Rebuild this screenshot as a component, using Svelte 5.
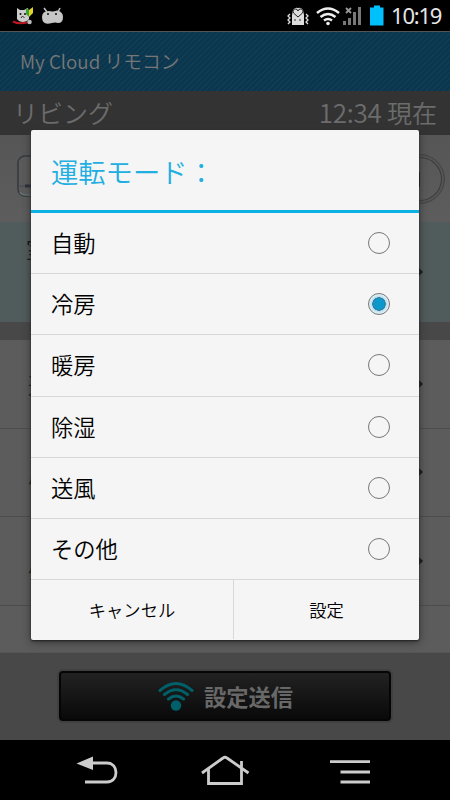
<script lang="ts">
    const modes = ["自動", "冷房", "暖房", "除湿", "送風", "その他"];
    const settings = ["運", "風", "風"];
    let selected = $state("冷房");
</script>

<div class="phone">
    <header class="status">
        <svg class="notes" width="66" height="31" viewBox="0 0 66 31">
            <path d="M17 8l3 2h4l4-2 1 5v6q-2 3-6 3t-6-3v-5z" fill="#ccc"/>
            <path d="M26 8l3 2v7l-3-3z" fill="#36a334"/>
            <path d="M33 7v6l-4 4v-7z" fill="#e0d32b"/>
            <circle cx="20.5" cy="14" r="1" fill="#111"/>
            <circle cx="25" cy="14" r="1" fill="#111"/>
            <path d="M21 18l1.500-2 2 2" stroke="#333" fill="none"/>
            <path d="M13 21.500q6 3 14 1" stroke="#bd1720" stroke-width="2" fill="none"/>
            <circle cx="29.500" cy="22" r="2.300" fill="#bbb"/>
            <path d="M44 8l3 4M60 8l-2 4" stroke="#c4c4c4" stroke-width="1.500"/>
            <path d="M42 17q0-6 7-6 4 1 8-.500 6 1 6 6.500 0 6-5 6-3-1-6 0-10 3-10-6z" fill="#c6c6c6"/>
            <circle cx="48" cy="14" r="1" fill="#111"/>
            <circle cx="56" cy="14" r="1" fill="#111"/>
        </svg>
        <svg class="signals" width="100" height="31" viewBox="286 0 100 31">
            <path d="M292 25v-10l1-5q2-3 5-2 3-1 5 2l1 5v10z" fill="#ddd"/>
            <path d="M298 17l-4.500-4q-1.500-4 2-4 2 0 2.500 2 .500-2 2.500-2 3.500 0 2 4z" fill="#ddd" stroke="#222" stroke-width="1"/>
            <path d="M290 14l-2 2 2 2-2 2 2 2-2 2M306 14l2 2-2 2 2 2-2 2 2 2" stroke="#ddd" stroke-width="1.300" fill="none"/>
            <path d="M294 20h2M299 20h2" stroke="#333"/>
            <g fill="none" stroke="#eee" stroke-width="2.600">
                <path d="M317 13q11-9 22 0M320.500 17q7.500-6 15 0M324 20.500q4-3 8 0"/>
            </g>
            <circle cx="328" cy="23.500" r="1.800" fill="#eee"/>
            <path d="M343 21h3v4h-3zM348 18h3v7h-3zM353 12h3v13h-3zM358 7h3v18h-3z" fill="#777"/>
            <path d="M346 8l5 5M351 8l-5 5" stroke="#999" stroke-width="1.800"/>
            <path d="M370 7.500h4v-2h6v2h3.500v18h-13.500z" fill="#00c1fb"/>
        </svg>
        <span class="clock">10:19</span>
    </header>

    <div class="app-bar"><span>My Cloud リモコン</span></div>
    <div class="room"><span>リビング</span><span class="now"><b>12:34</b> 現在</span></div>
    <div class="unit">
        <svg width="40" height="56" viewBox="0 0 40 56">
            <rect x="4" y="-1" width="46" height="40" rx="7" fill="#5b5b5b" stroke="#343a3e" stroke-width="1.500" transform="translate(0 3)"/>
            <path d="M5 32h40" stroke="#4a4f57" stroke-width="1.500"/>
            <path d="M11 32h6" stroke="#2b2c3a" stroke-width="3"/>
            <path d="M6 38q1 3 7 3h30" stroke="#687174" stroke-width="1.500" fill="none"/>
        </svg>
        <div class="power"><i></i></div>
    </div>
    <div class="temperature"><span>室</span><svg width="10" height="12"><path d="M2 0l6 6-6 6-6-6z" fill="#111"/></svg></div>
    <div class="gap"></div>
    {#each settings as setting}
        <div class="setting"><span>{setting}</span><svg width="10" height="12"><path d="M2 0l6 6-6 6-6-6z" fill="#111"/></svg></div>
    {/each}
    <div class="rest"></div>
    <footer>
        <button class="send">
            <svg width="38" height="34" viewBox="0 0 38 34">
                <g fill="none" stroke="#006069" stroke-width="3" stroke-linecap="round">
                    <path d="M3 11.500Q19-2.500 35 11.500M7.500 15.500q11.500-9.500 23 0M11.500 20q7.500-6 15 0"/>
                </g>
                <circle cx="19" cy="26.500" r="5.200" fill="#006069"/>
            </svg>
            <span>設定送信</span>
        </button>
    </footer>
    <nav>
        <svg width="450" height="60" viewBox="0 0 450 60">
            <g fill="none" stroke="#ccc" stroke-width="2.800">
                <path d="M92 23h15c12 0 12 19 0 19H85"/>
                <path d="M202 33l21-15q2-1.500 4 0l21.500 15M208.500 29v14.500h33V21"/>
                <path d="M330 21.700h40M340.500 32h29.500M340.500 42h29.500"/>
            </g>
            <path d="M76.500 23.500L93 16.500v13.500z" fill="#ccc"/>
        </svg>
    </nav>

    <div class="dialog">
        <h1>運転モード：</h1>
        {#each modes as mode}
            <button class="mode" onclick={() => selected = mode}>
                <span>{mode}</span>
                <i class="radio" class:checked={selected == mode}></i>
            </button>
        {/each}
        <div class="actions">
            <button>キャンセル</button>
            <button>設定</button>
        </div>
    </div>
</div>

<style>
    :global(body) {
        background: #000;
    }

    .phone {
        position: relative;
        width: 450px;
        height: 800px;
        overflow: hidden;
        background: #5c5c5c;
        font-family: "Noto Sans CJK JP", sans-serif;
        font-weight: 350;
    }

    .phone > * {
        box-sizing: border-box;
    }

    button {
        border: 0;
        padding: 0;
        background: none;
        font: inherit;
        color: inherit;
    }

    svg {
        display: block;
    }

    .status {
        height: 31px;
        display: flex;
        align-items: center;
        background: #000;
        color: #e6e6e6;
    }

    .signals {
        margin-left: 220px;
    }

    .clock {
        margin-left: 5px;
        font: 22px/31px "Noto Sans", sans-serif;
        letter-spacing: -1.2px;
        white-space: nowrap;
    }

    .app-bar {
        height: 60px;
        padding: 0 0 3px 20px;
        border-top: 1px solid #555;
        display: flex;
        align-items: center;
        background: repeating-linear-gradient(135deg, #0a374f 0 2px, #143e52 2.5px 3px, #0a374f 3.5px 4px);
        color: #777;
        font-size: 18.8px;
    }

    .room {
        height: 44px;
        padding: 0 13px 3px 13px;
        display: flex;
        align-items: center;
        justify-content: space-between;
        background: #333;
        color: #6c6c6c;
        font-size: 25px;
    }

    .room b {
        font-size: 26px;
        font-weight: 350;
        letter-spacing: -0.3px;
    }

    .unit {
        height: 87px;
        padding: 19px 5px 0 14px;
        display: flex;
        justify-content: space-between;
        background: linear-gradient(#565656, #5d5d5d);
    }

    .power {
        box-sizing: border-box;
        width: 100px;
        height: 50px;
        padding: 17px 0 0 72px;
        border: 1px solid #444;
        border-radius: 25px;
        box-shadow: inset 0 0 0 2px #555, inset 0 0 0 3px #3b3b3b;
    }

    .power i {
        display: block;
        width: 2px;
        height: 15px;
        background: #111;
    }

    .temperature, .setting {
        display: flex;
        justify-content: space-between;
        align-items: center;
        padding: 0 25px 0 26px;
        color: #080808;
        font-size: 22px;
    }

    .setting {
        padding-left: 28px;
    }

    .temperature {
        height: 100px;
        background: #505c5b;
    }

    .temperature span {
        margin-bottom: 48px;
    }

    .gap {
        height: 18px;
        background: #484848;
    }

    .setting {
        height: 88.5px;
        border-bottom: 1px solid #4c4c4c;
    }

    .rest {
        height: 46.5px;
    }

    footer {
        height: 88px;
        padding: 18px 59px 0;
        background: #484848;
        border-top: 1px solid #555;
    }

    .send {
        width: 332px;
        height: 50px;
        display: flex;
        align-items: center;
        justify-content: center;
        gap: 9px;
        border: 2px solid #050505;
        border-radius: 4px;
        background: linear-gradient(#222, #090909);
        box-shadow: 0 0 0 2px #404040;
        color: #686868;
        font-size: 22.3px;
        font-weight: 700;
    }

    nav {
        height: 60px;
        background: #000;
    }

    .dialog {
        position: absolute;
        left: 31px;
        top: 130px;
        width: 388px;
        height: 510px;
        border-radius: 2px;
        background: #f5f5f5;
        box-shadow: 0 1px 2px #222, 0 2px 8px #333;
        color: #000;
    }

    h1 {
        box-sizing: border-box;
        height: 83px;
        margin: 0;
        padding: 1px 20px 0;
        display: flex;
        align-items: center;
        border-bottom: 3px solid #0ab1e2;
        color: #21aee0;
        font-size: 27.3px;
        font-weight: 350;
    }

    .mode {
        box-sizing: border-box;
        width: 100%;
        height: 61.2px;
        padding: 0 29.5px 0 20px;
        display: flex;
        align-items: center;
        justify-content: space-between;
        border-bottom: 1px solid #d8d8d8;
        font-size: 22.3px;
    }

    .mode span {
        margin-bottom: 2px;
    }

    .radio {
        box-sizing: border-box;
        width: 22px;
        height: 22px;
        border: 1px solid #777;
        border-radius: 50%;
    }

    .checked {
        background: radial-gradient(circle, #0c97cd 0 5.5px, #387e9b 6px 6.5px, #b6def0 7px, #e7f3f8 10px);
    }

    .actions {
        height: 59px;
        display: grid;
        grid-template-columns: 202px 1fr;
        font-size: 17.3px;
    }

    .actions button + button {
        border-left: 1px solid #d8d8d8;
    }
</style>
